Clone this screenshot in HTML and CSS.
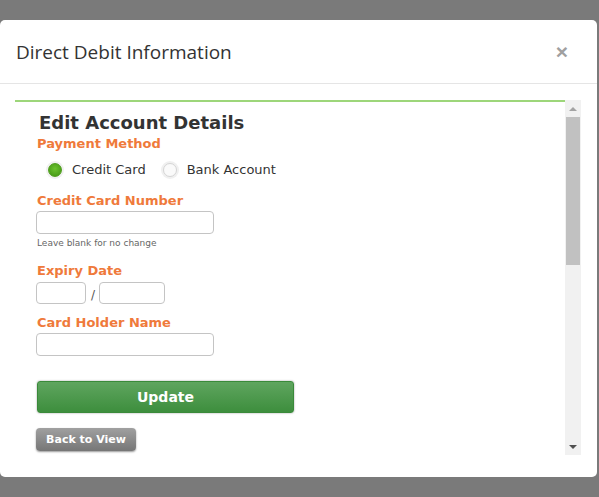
FILE: index.html
```html
<!DOCTYPE html>
<html>
<head>
<meta charset="utf-8"/>
<link rel="stylesheet" href="styles.css">
</head>
<body>
<div class="modal">
  <div class="modal-header">
    <h4 class="modal-title">Direct Debit Information</h4>
    <button class="close" type="button">&times;</button>
  </div>
  <div class="modal-body">
    <div class="frame">
      <div class="panel">
        <h2 class="heading">Edit Account Details</h2>

        <div class="label first">Payment Method</div>
        <div class="radios">
          <label class="radio"><span class="dot on"></span>Credit Card</label>
          <label class="radio"><span class="dot"></span>Bank Account</label>
        </div>

        <div class="label card-num">Credit Card Number</div>
        <input class="field wide" type="text">
        <div class="hint">Leave blank for no change</div>

        <div class="label expiry-label">Expiry Date</div>
        <div class="expiry">
          <input class="field month" type="text">
          <span class="slash">/</span>
          <input class="field year" type="text">
        </div>

        <div class="label holder">Card Holder Name</div>
        <input class="field wide" type="text">

        <button class="btn-update" type="button">Update</button>
        <button class="btn-back" type="button">Back to View</button>
      </div>

      <!-- frame scrollbar -->
      <div class="scrollbar">
        <div class="arrow up"></div>
        <div class="thumb"></div>
        <div class="arrow down"></div>
      </div>
    </div>
  </div>
</div>
</body>
</html>
```

FILE: styles.css
```css
body {
  margin: 0;
  padding-top: 20px;
  background: #7a7a7a;
  height: 477px;
  overflow: hidden;
}

.modal {
  width: 597px;
  height: 457px;
  background: #fff;
  border-radius: 5px;
  box-sizing: border-box;
}

.modal-header {
  height: 64px;
  box-sizing: border-box;
  border-bottom: 1px solid #e5e5e5;
  display: flex;
  align-items: center;
  justify-content: space-between;
  padding: 0 29px 0 16px;
}

.modal-title {
  margin: 0;
  font-family: "Open Sans", sans-serif;
  font-weight: normal;
  font-size: 19px;
  color: #333;
}

.close {
  border: none;
  background: none;
  padding: 0;
  font-family: "Liberation Sans", sans-serif;
  font-size: 21px;
  font-weight: bold;
  color: #a0a0a0;
  cursor: pointer;
}

.modal-body {
  padding: 16px 16px 0 15px;
}

.frame {
  height: 355px;
  display: flex;
}

.panel {
  flex: 1;
  overflow: hidden;
  border-top: 2px solid #9dd67a;
  padding: 0 22px;
  font-family: "DejaVu Sans", Verdana, sans-serif;
}

.scrollbar {
  width: 16px;
  background: #f1f1f1;
  display: flex;
  flex-direction: column;
}

.arrow {
  height: 17px;
  display: flex;
  justify-content: center;
  align-items: center;
}

.arrow::before {
  content: "";
  border-left: 4px solid transparent;
  border-right: 4px solid transparent;
}

.arrow.up::before {
  border-bottom: 4px solid #a3a3a3;
}

.arrow.down {
  margin-top: auto;
}

.arrow.down::before {
  border-top: 4px solid #505050;
}

.thumb {
  height: 148px;
  margin: 0 1px;
  background: #c1c1c1;
}

.heading {
  margin: 10px 0 0 2px;
  font-size: 18px;
  line-height: 22px;
  color: #333;
}

.label {
  font-size: 13px;
  font-weight: bold;
  color: #ef7a3b;
  line-height: 16px;
}

.first {
  margin-top: 2px;
}

.card-num {
  margin-top: 15px;
}

.expiry-label {
  margin-top: 14px;
}

.holder {
  margin-top: 11px;
}

.radios {
  display: flex;
  gap: 17px;
  margin: 10px 0 0 11px;
}

.radio {
  display: flex;
  align-items: center;
  gap: 10px;
  font-size: 13px;
  line-height: 16px;
  color: #333;
}

.dot {
  width: 14px;
  height: 14px;
  border-radius: 50%;
  box-sizing: border-box;
  border: 1px solid #d4d4d4;
  background: #fafafa;
  box-shadow: 0 0 0 2px #f0f0f0;
}

.dot.on {
  border: 1px solid #4f9c1e;
  background: radial-gradient(circle at 50% 40%, #6cc22e, #3f9212);
}

.field {
  display: block;
  margin: 2px 0 0 -1px;
  height: 23px;
  box-sizing: border-box;
  border: 1.5px solid #c4c4c4;
  border-radius: 4px;
  background: #fff;
}

.wide {
  width: 178px;
}

.hint {
  font-size: 9px;
  line-height: 12px;
  color: #666;
  margin-top: 3px;
}

.expiry {
  display: flex;
  align-items: center;
  margin-top: 3px;
}

.expiry .field {
  margin-top: 0;
  height: 22px;
}

.month {
  width: 50px;
}

.year {
  width: 66px;
}

.slash {
  font-size: 12px;
  color: #555;
  margin: 3px 5px 0 5px;
}

.btn-update {
  display: block;
  width: 257px;
  height: 32px;
  margin-top: 25px;
  border: 1px solid #3a8a3a;
  border-radius: 3px;
  background: linear-gradient(#5fa55f, #3d8e3d);
  box-shadow: 0 0 2px rgba(0,0,0,0.4);
  color: #fff;
  font-family: "DejaVu Sans", Verdana, sans-serif;
  font-weight: bold;
  font-size: 14px;
}

.btn-back {
  display: block;
  margin: 15px 0 0 -1px;
  width: 100px;
  height: 23px;
  padding: 0;
  border: none;
  border-radius: 4px;
  background: linear-gradient(#a0a0a0, #767676);
  box-shadow: 0 1px 2px rgba(0,0,0,0.4);
  color: #fff;
  font-family: "DejaVu Sans", Verdana, sans-serif;
  font-weight: bold;
  font-size: 11px;
}
```
